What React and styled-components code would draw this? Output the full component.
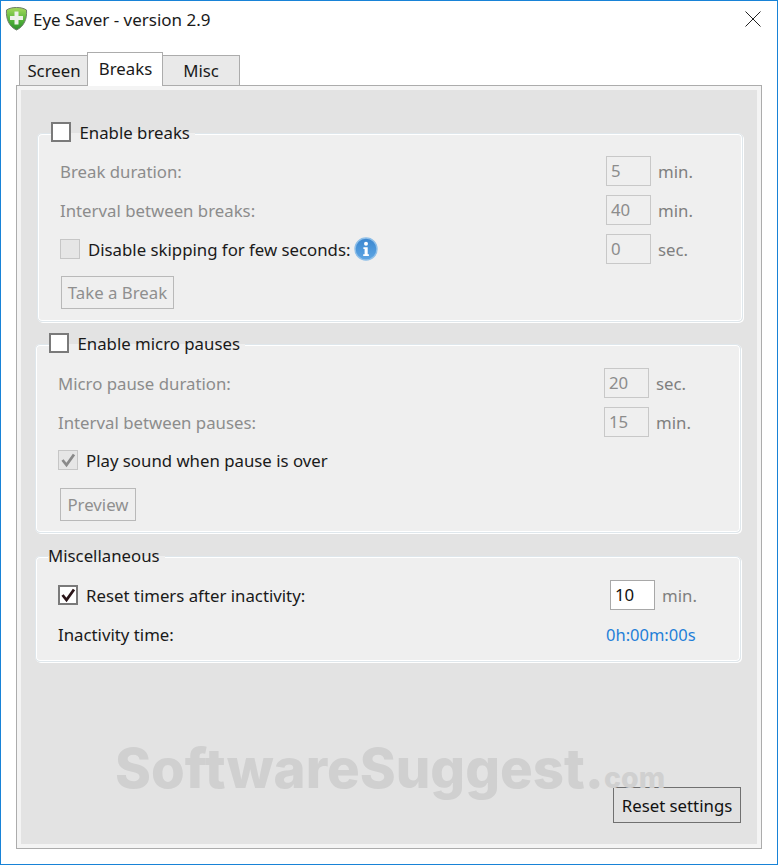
import React from "react";
import styled, { createGlobalStyle } from "styled-components";

const Global = createGlobalStyle`
  html, body { margin: 0; padding: 0; background: #fff; }
  * { box-sizing: border-box; }
  #root { width: 778px; height: 865px; }
`;

const Window = styled.div`
  width: 778px; height: 865px;
  border: 1px solid #1883d7;
  background: #fff;
  display: flex; flex-direction: column;
  padding: 0 15px 15px 15px;
  font-family: "Noto Sans", sans-serif;
  font-size: 16.8px;
  color: #1a1a1a;
`;
const TitleBar = styled.div`
  height: 51px;
  display: flex; align-items: flex-start;
  margin: 0 -15px;
  padding: 5px 16px 0 4px;
`;
const TitleText = styled.span`
  margin-left: 5px; margin-top: 2px; line-height: 24px; flex: 1; font-size: 17px;
`;
const Close = styled.svg`
  margin-top: 5px; width: 16px; height: 16px;
`;
const Tabs = styled.div`
  display: flex; align-items: flex-end; height: 34px; padding-left: 3px;
  position: relative; z-index: 1; margin-bottom: -1px;
`;
const Tab = styled.div`
  height: ${p => p.$active ? 34 : 31}px;
  width: ${p => p.$w}px;
  margin-left: ${p => p.$ml || 0}px;
  background: ${p => p.$active ? "#fff" : "#e9e9e9"};
  border: 1px solid #acacac;
  border-bottom: ${p => p.$active ? "none" : "1px solid #acacac"};
  display: flex; align-items: center; justify-content: center;
  padding-bottom: ${p => p.$active ? 2 : 0}px;
  padding-left: ${p => p.$pl || 0}px;
`;
const Panel = styled.div`
  flex: 1;
  border: 1px solid #acacac;
  background: #e3e3e3;
  box-shadow: inset 0 0 0 4px #f4f4f4;
  padding: 35px 20px 25px 18px;
  display: flex; flex-direction: column;
  position: relative;
`;
const Group = styled.fieldset`
  margin: ${p => p.$mt || 0}px ${p => p.$mr || 0}px 0 ${p => p.$ml || 0}px;
  height: ${p => p.$h}px;
  padding: 0;
  border: 1px solid #dfe7ec;
  box-shadow: inset 0 0 0 1px #fff, 1px 1px 0 #fff;
  border-radius: 5px;
  background: #efefef;
  min-width: 0;
`;
const Legend = styled.legend`
  display: flex; align-items: center;
  gap: 8.5px;
  margin-left: ${p => p.$ml || 13}px;
  padding: 0 5px 2px 0;
  height: 24px;
  background: linear-gradient(#e3e3e3 50%, #efefef 50%);
`;
const Box = styled.span`
  width: 20px; height: 20px;
  flex: none;
  display: inline-flex; align-items: center; justify-content: center;
  border: ${p => p.$disabled ? "1px solid #c6c6c6" : "2px solid #7a7a7a"};
  background: ${p => p.$disabled ? "#e6e6e6" : "#fff"};
`;
const Rows = styled.div`
  padding: ${p => p.$pt || 0}px 0 0 22px;
  display: flex; flex-direction: column;
`;
const Row = styled.div`
  display: flex; align-items: center;
  height: 30px;
  margin-bottom: ${p => p.$mb || 9}px;
`;
const Label = styled.span`
  flex: 1; display: flex; align-items: center; gap: 8px;
  color: ${p => p.$disabled ? "#8c8c8c" : "#1a1a1a"};
`;
const Input = styled.div`
  width: 45px; height: 30px;
  border: 1px solid ${p => p.$disabled ? "#c8c8c8" : "#a8a8a8"};
  background: ${p => p.$disabled ? "#efefef" : "#fff"};
  color: ${p => p.$disabled ? "#8c8c8c" : "#111"};
  padding-left: 4px;
  line-height: 27px;
`;
const Unit = styled.span`
  width: ${p => p.$w}px; padding-left: 7px;
  color: #7f7f7f;
`;
const Time = styled.span`
  width: ${p => p.$w}px; color: #1f7fd8; font-size: 16.5px;
`;
const Btn = styled.div`
  display: flex; align-items: center; justify-content: center;
  border: 1px solid ${p => p.$disabled ? "#b9b9b9" : "#707070"};
  color: ${p => p.$disabled ? "#8f8f8f" : "#111"};
  background: ${p => p.$disabled ? "#efefef" : "#e1e1e1"};
  width: ${p => p.$w}px; height: ${p => p.$h || 33}px;
  margin-left: ${p => p.$ml || 0}px;
  margin-top: ${p => p.$mt || 0}px;
`;
const Spacer = styled.div`flex: 1;`;
const BottomBar = styled.div`display: flex; justify-content: flex-end;`;
const Watermark = styled.div`
  position: absolute; left: 98px; top: 647px;
  font-family: Inter, sans-serif; font-weight: 800;
  color: #d0d0d0;
  font-size: 54.5px; line-height: 70px;
  white-space: nowrap;
  pointer-events: none;
`;
const WatermarkTld = styled.span`font-size: 28.5px;`;
const InfoIcon = styled.svg`
  margin-left: -4px; flex: none;
`;

const Check = ({ color }) => (
  <svg width="16" height="16" viewBox="0 0 16 16">
    <path d="M2.5 8 L6.5 13 L14 2.5" fill="none" stroke={color} strokeWidth="2.8" />
  </svg>
);

const Shield = () => (
  <svg width="23" height="25" viewBox="0 0 23 25">
    <defs>
      <linearGradient id="sg" x1="0" y1="0" x2="0" y2="1">
        <stop offset="0" stopColor="#a6d95c" />
        <stop offset="0.55" stopColor="#55b53a" />
        <stop offset="1" stopColor="#2c8f2c" />
      </linearGradient>
    </defs>
    <path d="M11.5 1.5 C15 1.5 18.5 2 21.5 4 C22.2 13 19 20.5 11.5 24 C4 20.5 .8 13 1.5 4 C4.5 2 8 1.5 11.5 1.5 Z" fill="url(#sg)" stroke="#6f7d6c" />
    <path d="M9.5 5.5h4v4.5h4.5v4h-4.5v4.5h-4V14H5v-4h4.5z" fill="#eef2ea" />
  </svg>
);

const Info = () => (
  <InfoIcon width="24" height="24" viewBox="0 0 24 24">
    <defs>
      <linearGradient id="ig" x1="0" y1="0" x2="0" y2="1">
        <stop offset="0" stopColor="#3a86cf" />
        <stop offset="1" stopColor="#5ea6e4" />
      </linearGradient>
    </defs>
    <circle cx="12" cy="12" r="11" fill="url(#ig)" stroke="#8fbfe8" strokeWidth="1.4" />
    <circle cx="12" cy="6.8" r="2" fill="#fff" />
    <path d="M9.4 10.3h4.3v7h1.2v1.7H9.2v-1.7h1.4v-5.3H9.4z" fill="#fff" />
  </InfoIcon>
);

export default function App() {
  return (
    <Window>
      <Global />
      <TitleBar>
        <Shield />
        <TitleText>Eye Saver - version 2.9</TitleText>
        <Close viewBox="0 0 16 16">
          <path d="M.5.5l15 15M15.5.5l-15 15" stroke="#222" strokeWidth="1" fill="none" />
        </Close>
      </TitleBar>
      <Tabs>
        <Tab $w={69} $pl={1}>Screen</Tab>
        <Tab $active $w={76} $ml={-1} $pl={1}>Breaks</Tab>
        <Tab $w={78} $ml={-1}>Misc</Tab>
      </Tabs>
      <Panel>
        <Watermark>SoftwareSuggest.<WatermarkTld>com</WatermarkTld></Watermark>
        <Group $ml={2} $mr={-2} $h={201}>
          <Legend>
            <Box />Enable breaks
          </Legend>
          <Rows $pt={11}>
            <Row><Label $disabled>Break duration:</Label><Input $disabled>5</Input><Unit $w={91}>min.</Unit></Row>
            <Row><Label $disabled>Interval between breaks:</Label><Input $disabled>40</Input><Unit $w={91}>min.</Unit></Row>
            <Row>
              <Label><Box $disabled />Disable skipping for few seconds:<Info /></Label>
              <Input $disabled>0</Input><Unit $w={91}>sec.</Unit>
            </Row>
            <Btn $disabled $w={113} $ml={1} $mt={3}>Take a Break</Btn>
          </Rows>
        </Group>
        <Group $mt={10} $h={201}>
          <Legend>
            <Box />Enable micro pauses
          </Legend>
          <Rows $pt={12}>
            <Row><Label $disabled>Micro pause duration:</Label><Input $disabled>20</Input><Unit $w={91}>sec.</Unit></Row>
            <Row $mb={8}><Label $disabled>Interval between pauses:</Label><Input $disabled>15</Input><Unit $w={91}>min.</Unit></Row>
            <Row>
              <Label><Box $disabled><Check color="#8a8a8a" /></Box>Play sound when pause is over</Label>
            </Row>
            <Btn $disabled $w={76} $ml={2} $mt={4}>Preview</Btn>
          </Rows>
        </Group>
        <Group $mt={11} $h={118}>
          <Legend $ml={12}>Miscellaneous</Legend>
          <Rows $pt={12}>
            <Row $mb={9}>
              <Label><Box><Check color="#2a1518" /></Box>Reset timers after inactivity:</Label>
              <Input>10</Input><Unit $w={85}>min.</Unit>
            </Row>
            <Row>
              <Label>Inactivity time:</Label>
              <Time $w={134}>0h:00m:00s</Time>
            </Row>
          </Rows>
        </Group>
        <Spacer />
        <BottomBar>
          <Btn $w={128} $h={36}>Reset settings</Btn>
        </BottomBar>
      </Panel>
    </Window>
  );
}
